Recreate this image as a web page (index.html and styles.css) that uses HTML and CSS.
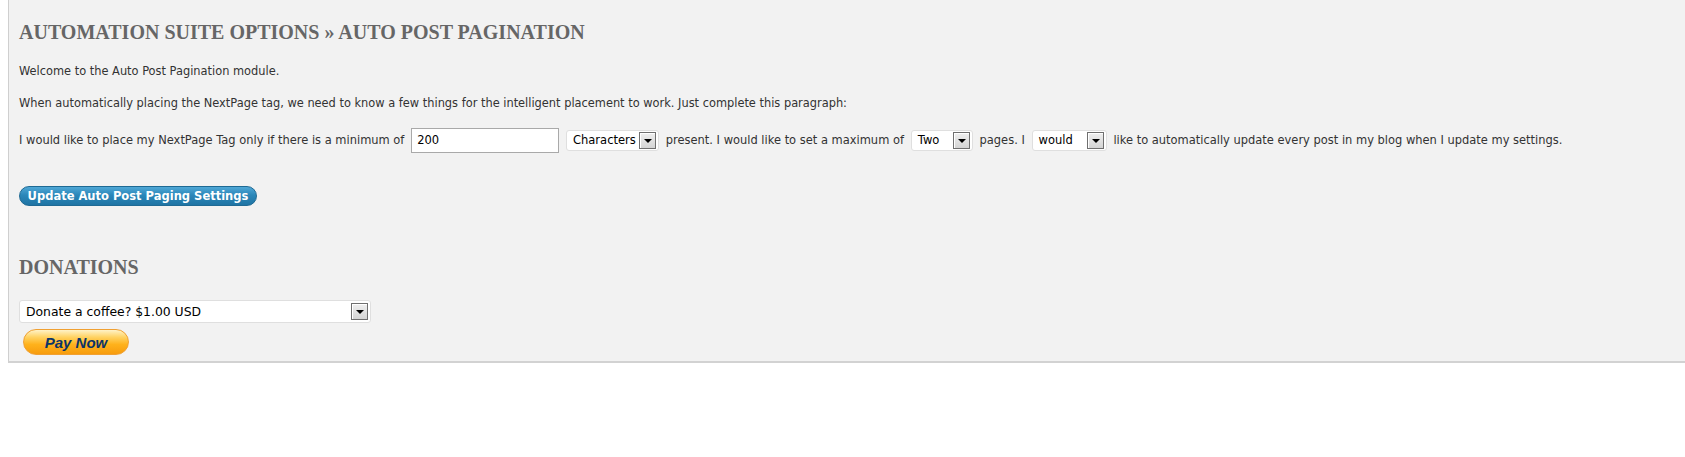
FILE: index.html
```html
<!DOCTYPE html>
<html>
<head>
<meta charset="utf-8">
<title>Auto Post Pagination</title>
<link rel="stylesheet" href="styles.css">
</head>
<body>
<div class="wrap">
  <h2 class="title">Automation Suite Options » Auto Post Pagination</h2>
  <p class="text">Welcome to the Auto Post Pagination module.</p>
  <p class="text">When automatically placing the NextPage tag, we need to know a few things for the intelligent placement to work. Just complete this paragraph:</p>
  <form class="settings">
    <div class="row">
      <span>I would like to place my NextPage Tag only if there is a minimum of</span>
      <input class="num" type="text" value="200">
      <span class="select sel-chars"><span class="val">Characters</span><span class="arrow"></span></span>
      <span>present. I would like to set a maximum of</span>
      <span class="select sel-two"><span class="val">Two</span><span class="arrow"></span></span>
      <span>pages. I</span>
      <span class="select sel-would"><span class="val">would</span><span class="arrow"></span></span>
      <span>like to automatically update every post in my blog when I update my settings.</span>
    </div>
    <div class="submit">
      <button type="button" class="btn-primary">Update Auto Post Paging Settings</button>
    </div>
  </form>
  <h2 class="title donations">Donations</h2>
  <div class="donate">
    <span class="select sel-donate"><span class="val">Donate a coffee? $1.00 USD</span><span class="arrow"></span></span>
    <button type="button" class="paynow">Pay Now</button>
  </div>
</div>
</body>
</html>
```
FILE: styles.css
```css
html, body {
  margin: 0;
  padding: 0;
  background: #ffffff;
}

body {
  font-family: "DejaVu Sans", Verdana, sans-serif;
  font-size: 11.4px;
  color: #333333;
}

.wrap {
  margin-left: 8px;
  background: #f2f2f2;
  border-left: 1px solid #cfcfcf;
  border-bottom: 2px solid #d2d2d2;
  padding: 20px 10px 6px 10px;
}

.title {
  margin: 0 0 19px 0;
  font-family: "Liberation Serif", "Times New Roman", serif;
  font-size: 20px;
  font-weight: bold;
  text-transform: uppercase;
  color: #666666;
  line-height: 25px;
}

.text {
  margin: 0 0 17px 0;
  line-height: 15px;
}

.settings {
  margin: 0;
}

.row {
  display: flex;
  align-items: center;
  gap: 6.8px;
  height: 24px;
  white-space: nowrap;
  font-size: 11.46px;
}

.num {
  box-sizing: border-box;
  width: 148px;
  height: 25px;
  margin: 0;
  padding: 0 5px;
  border: 1px solid #a9a9a9;
  background: #ffffff;
  font-family: "DejaVu Sans", Verdana, sans-serif;
  font-size: 11.5px;
  color: #000000;
}

.select {
  box-sizing: border-box;
  display: inline-flex;
  align-items: center;
  justify-content: space-between;
  height: 21px;
  padding: 0 2px 0 6px;
  background: #ffffff;
  border: 1px solid #dfdfdf;
  border-radius: 3px;
  font-size: 11.5px;
  color: #000000;
}

.sel-chars { width: 93px; }
.sel-two { width: 62px; }
.sel-would { width: 75px; }

.arrow {
  box-sizing: border-box;
  position: relative;
  flex: none;
  width: 17px;
  height: 17px;
  border: 1px solid #6f6f6f;
  background: linear-gradient(#efefef, #d4d4d4);
  box-shadow: inset 1px 1px 0 #ffffff;
}

.arrow::after {
  content: "";
  position: absolute;
  left: 4px;
  top: 6px;
  border-left: 4px solid transparent;
  border-right: 4px solid transparent;
  border-top: 4px solid #000000;
}

.submit {
  margin-top: 34px;
}

.btn-primary {
  box-sizing: border-box;
  width: 238px;
  height: 20px;
  padding: 0;
  border: 1px solid #1f6a94;
  border-radius: 11px;
  background: linear-gradient(#4fa7d6 0%, #2b87b9 45%, #1f74a4 100%);
  color: #ffffff;
  font-family: "DejaVu Sans", Verdana, sans-serif;
  font-size: 11.5px;
  font-weight: bold;
  line-height: 18px;
}

.donations {
  margin-top: 49px;
  margin-bottom: 20px;
}

.donate {
  display: flex;
  flex-direction: column;
  align-items: flex-start;
  gap: 6px;
}

.sel-donate {
  width: 352px;
  height: 23px;
  font-size: 12.4px;
}

.paynow {
  box-sizing: border-box;
  width: 106px;
  height: 26px;
  margin-left: 4px;
  padding: 0;
  border: 1px solid #f0a032;
  border-radius: 13px;
  background: linear-gradient(#fff3c8 0%, #ffd262 30%, #ffb21c 60%, #f79c0d 100%);
  color: #0b3468;
  font-family: "Liberation Sans", Arial, sans-serif;
  font-size: 15px;
  font-weight: bold;
  font-style: italic;
}
```
